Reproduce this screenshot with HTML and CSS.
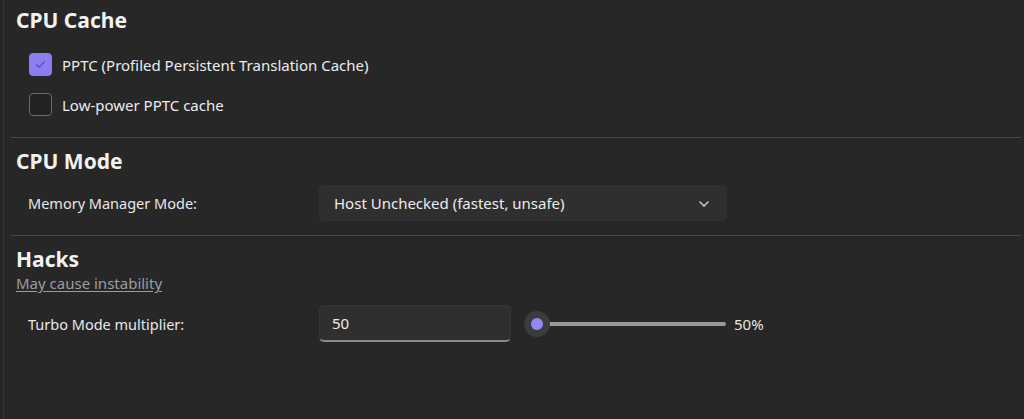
FILE: index.html
```html
<!DOCTYPE html>
<html>
<head>
<meta charset="utf-8">
<link rel="stylesheet" href="styles.css">
</head>
<body>
<div class="panel">
  <section class="section section-cache">
    <h2 class="heading heading-first">CPU Cache</h2>
    <div class="checks">
      <label class="check">
        <span class="box box-on">
          <svg width="13" height="13" viewBox="0 0 13 13"><path d="M2.5 6.8 L5.2 9.3 L10.5 3.6" fill="none" stroke="#5b4bb8" stroke-width="1.2" stroke-linecap="round" stroke-linejoin="round"/></svg>
        </span>
        <span class="check-text">PPTC (Profiled Persistent Translation Cache)</span>
      </label>
      <label class="check">
        <span class="box"></span>
        <span class="check-text">Low-power PPTC cache</span>
      </label>
    </div>
  </section>
  <hr class="divider">
  <section class="section section-mode">
    <h2 class="heading">CPU Mode</h2>
    <div class="row row-mode">
      <span class="row-label">Memory Manager Mode:</span>
      <div class="select">
        <span>Host Unchecked (fastest, unsafe)</span>
        <svg class="chev" width="10" height="6" viewBox="0 0 10 6"><path d="M1 1 L5 5 L9 1" fill="none" stroke="#d8d8d8" stroke-width="1.4" stroke-linecap="round" stroke-linejoin="round"/></svg>
      </div>
    </div>
  </section>
  <hr class="divider">
  <section class="section">
    <h2 class="heading">Hacks</h2>
    <a class="warn">May cause instability</a>
    <div class="row row-turbo">
      <span class="row-label">Turbo Mode multiplier:</span>
      <div class="input">50</div>
      <div class="slider">
        <span class="thumb"><span class="thumb-dot"></span></span>
        <span class="track"></span>
      </div>
      <span class="pct">50%</span>
    </div>
  </section>
</div>
</body>
</html>
```

FILE: styles.css
```css
* { box-sizing: border-box; }
html, body {
  margin: 0;
  padding: 0;
  background: #272727;
  height: 100%;
}
body {
  font-family: "Noto Sans", "Open Sans", sans-serif;
  color: #e6e6e6;
  overflow: hidden;
}
.panel {
  margin-left: 3px;
  border-left: 1px solid #333333;
  min-height: 419px;
  padding: 0 3px 0 7px;
}
.heading {
  margin: 0;
  padding: 9px 0 0 5px;
  font-size: 21px;
  line-height: 28px;
  font-weight: 700;
  color: #f2f2f2;
}
.heading-first {
  padding-top: 6px;
}
.section-cache {
  padding-bottom: 21px;
}
.section-mode {
  padding-bottom: 14px;
}
.checks {
  display: flex;
  flex-direction: column;
  gap: 17px;
  padding: 19px 0 0 18px;
}
.check {
  display: flex;
  align-items: center;
  gap: 10px;
  height: 23px;
}
.box {
  width: 23px;
  height: 23px;
  border-radius: 4px;
  border: 1px solid #6a6a6a;
  background: #222222;
  display: flex;
  align-items: center;
  justify-content: center;
  flex: none;
}
.box-on {
  background: #8c7ef2;
  border-color: #8c7ef2;
}
.check-text {
  font-size: 15px;
  color: #ececec;
}
.divider {
  border: none;
  height: 1px;
  background: #464646;
  margin: 0;
}
.row {
  display: flex;
  align-items: center;
  padding-left: 17px;
}
.row-mode {
  margin-top: 10px;
}
.row-label {
  width: 291px;
  flex: none;
  font-size: 14.5px;
  color: #e8e8e8;
}
.select {
  width: 408px;
  height: 36px;
  background: #2f2f2f;
  border-radius: 5px;
  border: 1px solid #323232;
  display: flex;
  align-items: center;
  justify-content: space-between;
  padding: 0 17px 0 14px;
  font-size: 15px;
  color: #ececec;
}
.chev { margin-top: 1px; }
.warn {
  display: block;
  width: max-content;
  margin: 1px 0 0 5px;
  font-size: 15px;
  color: #9c9c9c;
  text-decoration: underline;
  text-underline-offset: 2px;
  line-height: 18px;
}
.row-turbo {
  margin-top: 13px;
}
.input {
  width: 192px;
  height: 37px;
  flex: none;
  background: #2f2f2f;
  border-radius: 5px;
  border: 1px solid #343434;
  border-bottom: 2px solid #8a8a8a;
  display: flex;
  align-items: center;
  padding-left: 12px;
  font-size: 15px;
  color: #eeeeee;
}
.slider {
  display: flex;
  align-items: center;
  margin-left: 13px;
  width: 202px;
  flex: none;
}
.thumb {
  width: 26px;
  height: 26px;
  border-radius: 50%;
  background: #3c3c3c;
  display: flex;
  align-items: center;
  justify-content: center;
  flex: none;
  position: relative;
  z-index: 1;
}
.thumb-dot {
  width: 12px;
  height: 12px;
  border-radius: 50%;
  background: #9488f7;
}
.track {
  flex: 1;
  height: 4px;
  border-radius: 2px;
  background: #9a9a9a;
  margin-left: -4px;
}
.pct {
  margin-left: 8px;
  font-size: 15px;
  color: #e6e6e6;
}
```
